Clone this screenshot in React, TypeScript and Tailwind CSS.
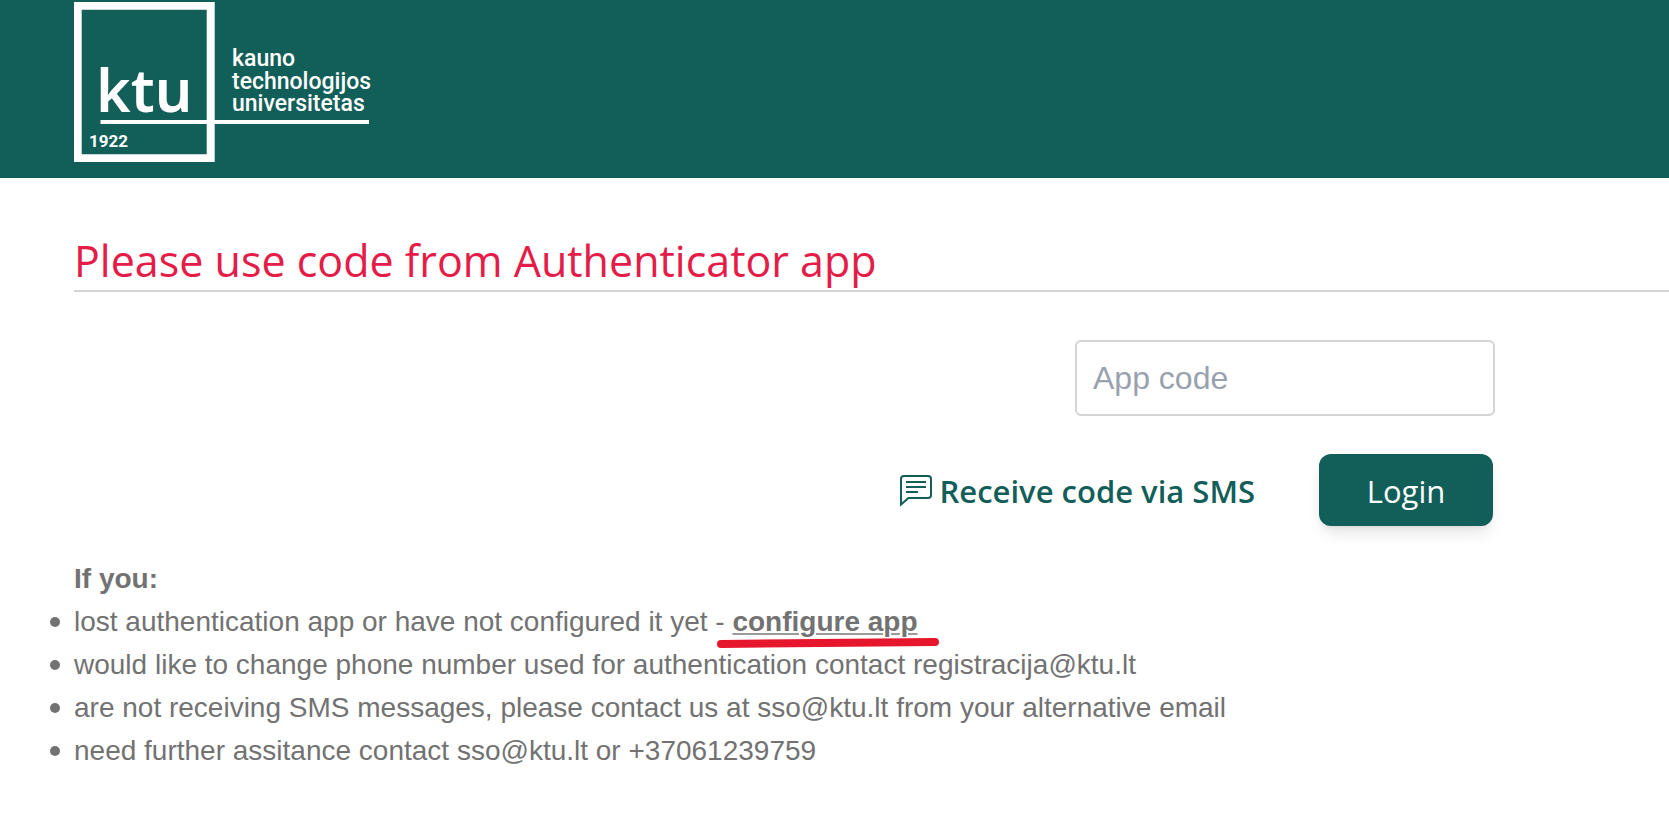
function Logo() {
  return (
    <svg
      role="img"
      aria-label="Kauno technologijos universitetas"
      className="h-[164px] w-[300px] fill-white font-['Roboto',sans-serif]"
      viewBox="0 0 300 164"
    >
      <path fillRule="evenodd" d="M0 2H140.7V162H0ZM7.7 9.7V154.2H132.7V9.7Z" />
      <path d="M26.5 120H295V124H26.5Z" />
      <g className="font-['Noto_Sans',sans-serif] font-semibold">
        <text x="22" y="112" fontSize="59">ktu</text>
      </g>
      <text x="15" y="147" fontSize="17" fontWeight="700">1922</text>
      <g fontSize="23" fontWeight="500">
        <text x="158" y="66">kauno</text>
        <text x="158" y="89">technologijos</text>
        <text x="158" y="111">universitetas</text>
      </g>
    </svg>
  );
}

function MessageIcon() {
  return (
    <svg aria-hidden="true" className="h-8 w-8" viewBox="0 0 32 32" fill="none" stroke="currentColor" strokeWidth="2">
      <path d="M1 29.5V4Q1 1 4 1H28Q31 1 31 4V20Q31 23 28 23H8.5L1 29.5Z" />
      <path d="M6 7H26M6 12H26M6 17H18" />
    </svg>
  );
}

function MarkerStroke() {
  return (
    <svg
      aria-hidden="true"
      className="pointer-events-none absolute top-[37px] -left-4 h-3 w-[224px]"
      viewBox="0 0 224 12"
      fill="none"
      stroke="#e6162d"
      strokeWidth="8"
      strokeLinecap="round"
    >
      <path d="M5 7L219 5" />
    </svg>
  );
}

const bullet =
  "flex items-center gap-[14px] before:size-[10px] before:shrink-0 before:rounded-full before:bg-[#727272]";

export default function App() {
  return (
    <div className="min-h-screen bg-white font-['Liberation_Sans',Arial,sans-serif] text-[#727272]">
      <header className="bg-[#125e59] pb-[14px] pl-[74px]">
        <Logo />
      </header>

      <main className="pl-[74px]">
        <h1 className="border-b-2 border-[#d4d4d4] pt-[54px] font-['Open_Sans','Noto_Sans',sans-serif] text-[43px] leading-[58px] text-[#e51b48]">
          Please use code from Authenticator app
        </h1>

        <form className="flex flex-col items-end pt-12 pr-[174px]" onSubmit={(e) => e.preventDefault()}>
          <input
            type="text"
            aria-label="App code"
            placeholder="App code"
            className="h-[76px] w-[420px] rounded-md border-2 border-[#d4d4d4] px-4 text-[32px] text-gray-700 placeholder:text-gray-400"
          />
          <div className="flex items-center gap-16 pt-[38px] pr-[2px] font-['Open_Sans','Noto_Sans',sans-serif]">
            <button type="button" className="flex items-center gap-2 pt-[2px] text-[31px] leading-10 font-semibold text-[#125e59]">
              <MessageIcon />
              Receive code via SMS
            </button>
            <button
              type="submit"
              className="h-[72px] w-[174px] rounded-xl bg-[#125e59] pt-[2px] text-[31px] text-white shadow-lg"
            >
              Login
            </button>
          </div>
        </form>

        <section className="pt-[31px] text-[28px] leading-[43px]">
          <h2 className="font-bold">If you:</h2>
          <ul className="-ml-6">
            <li className={bullet}>
              <span>
                lost authentication app or have not configured it yet -{" "}
                <span className="relative inline-block">
                  <a
                    href="#configure"
                    className="font-bold underline decoration-[#9a9a9a] decoration-2 underline-offset-2"
                  >
                    configure app
                  </a>
                  <MarkerStroke />
                </span>
              </span>
            </li>
            <li className={bullet}>
              <span>would like to change phone number used for authentication contact registracija@ktu.lt</span>
            </li>
            <li className={bullet}>
              <span>are not receiving SMS messages, please contact us at sso@ktu.lt from your alternative email</span>
            </li>
            <li className={bullet}>
              <span>need further assitance contact sso@ktu.lt or +37061239759</span>
            </li>
          </ul>
        </section>
      </main>
    </div>
  );
}
